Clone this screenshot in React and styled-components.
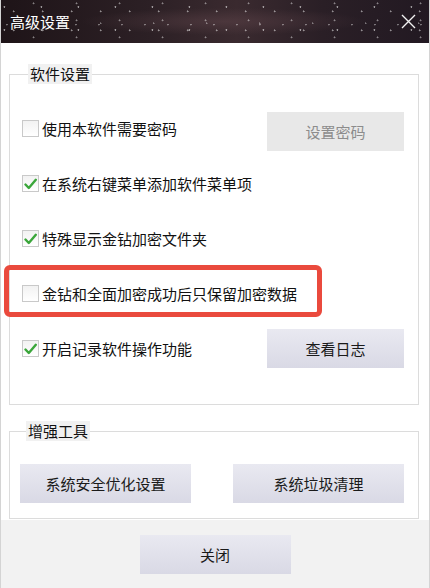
import React from "react";
import styled, { createGlobalStyle } from "styled-components";

const GlobalStyle = createGlobalStyle`
  html, body {
    margin: 0;
    padding: 0;
    background: #ffffff;
  }
  body {
    font-family: "Noto Sans CJK SC", "Noto Sans", "Liberation Sans", sans-serif;
  }
`;

const Window = styled.div`
  width: 430px;
  height: 588px;
  box-sizing: border-box;
  display: flex;
  flex-direction: column;
  border-left: 1px solid #d4d4d4;
  border-right: 1px solid #d4d4d4;
  background: #ffffff;
  overflow: hidden;
`;

const TitleBar = styled.div`
  height: 43px;
  flex-shrink: 0;
  margin: 0 -1px;
  display: flex;
  align-items: center;
  justify-content: space-between;
  padding: 0 14px 0 10px;
  color: #ffffff;
  font-size: 15px;
  background-color: #241a1f;
  background-image:
    radial-gradient(circle at 12% 30%, rgba(255,255,255,0.55) 0 0.7px, transparent 1.2px),
    radial-gradient(circle at 47% 60%, rgba(255,255,255,0.5) 0 0.7px, transparent 1.2px),
    radial-gradient(circle at 78% 20%, rgba(255,255,255,0.45) 0 0.7px, transparent 1.2px),
    radial-gradient(circle at 30% 85%, rgba(255,255,255,0.4) 0 0.6px, transparent 1.1px),
    radial-gradient(circle at 90% 75%, rgba(255,255,255,0.4) 0 0.6px, transparent 1.1px),
    radial-gradient(ellipse at 52% 50%, rgba(92,66,72,0.55), transparent 45%),
    linear-gradient(90deg, #1e1418 0%, #2c2025 35%, #3a2a2f 55%, #2a1f26 75%, #221922 100%);
  background-size: 37px 23px, 29px 19px, 43px 17px, 23px 29px, 53px 31px, 100% 100%, 100% 100%;
`;

const Title = styled.span`
  letter-spacing: 0;
`;

const CloseIcon = styled.svg`
  width: 15px;
  height: 15px;
  display: block;
`;

const Body = styled.div`
  flex: 1;
  min-height: 0;
  background: #ffffff;
  padding: 21px 10px 0 8px;
  display: flex;
  flex-direction: column;
  gap: 16px;
`;

const Group = styled.fieldset`
  margin: 0;
  padding: ${(p) => p.$pad};
  border: 1px solid #dcdcdc;
  min-width: 0;
  display: flex;
  flex-direction: column;
`;

const Legend = styled.legend`
  margin-left: 6px;
  padding: 0 2px;
  height: 20px;
  line-height: 20px;
  font-size: 15px;
  color: #111;
  background: #f1f1f1;
`;

const Row = styled.div`
  position: relative;
  height: 55px;
  display: flex;
  align-items: center;
  justify-content: space-between;
`;

const Highlight = styled.div`
  position: absolute;
  left: -18px;
  top: -1px;
  width: 318px;
  height: 52px;
  box-sizing: border-box;
  border: 5px solid #ea4a3d;
  border-radius: 6px;
  pointer-events: none;
`;

const Check = styled.label`
  display: flex;
  align-items: center;
  gap: 3px;
  font-size: 15px;
  color: #111;
`;

const Box = styled.span`
  width: 17px;
  height: 17px;
  box-sizing: border-box;
  border: 1px solid #c9c9c9;
  background: linear-gradient(180deg, #f2f2f2, #ffffff);
  display: flex;
  align-items: center;
  justify-content: center;
`;

const Button = styled.button`
  width: ${(p) => p.$w}px;
  height: 39px;
  border: none;
  padding: 0;
  font-family: inherit;
  font-size: 15px;
  color: ${(p) => (p.disabled ? "#8c8c8c" : "#1a1a1a")};
  background: ${(p) =>
    p.disabled ? "#e8e8e8" : "linear-gradient(180deg, #e9e9f1 0%, #d9d9e5 100%)"};
  margin-top: ${(p) => p.$shift || 0}px;
`;

const ButtonRow = styled.div`
  display: flex;
  justify-content: space-between;
`;

const Footer = styled.div`
  height: 68px;
  flex-shrink: 0;
  background: #f2f2f2;
  display: flex;
  justify-content: center;
  padding-top: 15px;
  box-sizing: border-box;
`;

const CheckMark = () => (
  <svg width="13" height="12" viewBox="0 0 13 12">
    <path d="M1.5 6.5 L4.8 10 L11.8 1.8" fill="none" stroke="#3aa63a" strokeWidth="2.4" strokeLinecap="round" strokeLinejoin="round" />
  </svg>
);

const CheckItem = ({ checked, children }) => (
  <Check>
    <Box>{checked && <CheckMark />}</Box>
    {children}
  </Check>
);

export default function App() {
  return (
    <>
      <GlobalStyle />
      <Window>
        <TitleBar>
          <Title>高级设置</Title>
          <CloseIcon viewBox="0 0 15 15">
            <path d="M1 1 L14 14 M14 1 L1 14" stroke="#f2f2f2" strokeWidth="1.4" />
          </CloseIcon>
        </TitleBar>
        <Body>
          <Group $pad="17px 14px 28px 12px">
            <Legend>软件设置</Legend>
            <Row>
              <CheckItem>使用本软件需要密码</CheckItem>
              <Button $w={137} $shift={5} disabled>设置密码</Button>
            </Row>
            <Row>
              <CheckItem checked>在系统右键菜单添加软件菜单项</CheckItem>
            </Row>
            <Row>
              <CheckItem checked>特殊显示金钻加密文件夹</CheckItem>
            </Row>
            <Row>
              <CheckItem>金钻和全面加密成功后只保留加密数据</CheckItem>
              <Highlight />
            </Row>
            <Row>
              <CheckItem checked>开启记录软件操作功能</CheckItem>
              <Button $w={137}>查看日志</Button>
            </Row>
          </Group>
          <Group $pad="23px 14px 15px 10px">
            <Legend>增强工具</Legend>
            <ButtonRow>
              <Button $w={171}>系统安全优化设置</Button>
              <Button $w={171}>系统垃圾清理</Button>
            </ButtonRow>
          </Group>
        </Body>
        <Footer>
          <Button $w={151}>关闭</Button>
        </Footer>
      </Window>
    </>
  );
}
